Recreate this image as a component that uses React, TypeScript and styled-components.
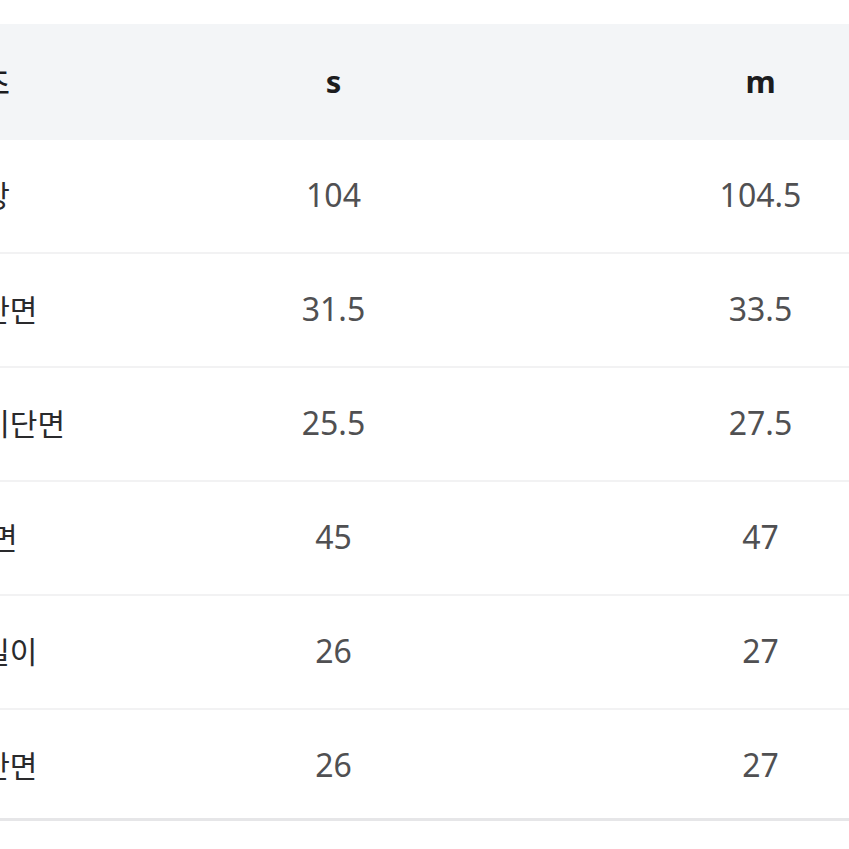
import React from "react";
import styled, { createGlobalStyle } from "styled-components";

const Global = createGlobalStyle`
  html, body { margin: 0; padding: 0; background: #ffffff; overflow: hidden; }
  body { font-family: "Noto Sans", "Noto Sans CJK KR", sans-serif; }
`;

const Page = styled.div`
  width: 849px;
  height: 849px;
  overflow: hidden;
  padding-top: 24px;
  box-sizing: border-box;
  background: #fff;
`;

const Table = styled.div`
  margin-left: -73px;
  width: 1049px;
  display: grid;
  grid-template-columns: 193px 427px 427px;
`;

const HeadCell = styled.div<{ $label?: boolean }>`
  height: 116px;
  background: #f3f5f7;
  display: flex;
  align-items: center;
  justify-content: ${(p) => (p.$label ? "flex-start" : "center")};
  font-family: "Noto Sans", "Noto Sans CJK KR", sans-serif;
  font-size: ${(p) => (p.$label ? "30px" : "31px")};
  font-weight: ${(p) => (p.$label ? 500 : 700)};
  color: #1c1c1e;
  padding-bottom: 2px;
  box-sizing: border-box;
`;

const Cell = styled.div<{ $label?: boolean; $last?: boolean }>`
  height: ${(p) => (p.$last ? "111px" : "114px")};
  border-bottom: ${(p) => (p.$last ? "3px solid #e6e6e8" : "2px solid #f2f2f3")};
  box-sizing: border-box;
  display: flex;
  align-items: center;
  justify-content: ${(p) => (p.$label ? "flex-start" : "center")};
  font-family: "Noto Sans", "Noto Sans CJK KR", sans-serif;
  font-size: ${(p) => (p.$label ? "30px" : "32px")};
  color: ${(p) => (p.$label ? "#2a2a2c" : "#505052")};
  padding-bottom: ${(p) => (p.$last ? "0px" : "4px")};
`;

const rows: [string, string, string][] = [
  ["총기장", "104", "104.5"],
  ["허리단면", "31.5", "33.5"],
  ["엉덩이단면", "25.5", "27.5"],
  ["힙 단면", "45", "47"],
  ["밑위길이", "26", "27"],
  ["밑단단면", "26", "27"],
];

export default function App() {
  return (
    <Page>
      <Global />
      <Table>
        <HeadCell $label>사이즈</HeadCell>
        <HeadCell>s</HeadCell>
        <HeadCell>m</HeadCell>
        {rows.map(([label, s, m], i) => {
          const last = i === rows.length - 1;
          return (
            <React.Fragment key={label}>
              <Cell $label $last={last}>{label}</Cell>
              <Cell $last={last}>{s}</Cell>
              <Cell $last={last}>{m}</Cell>
            </React.Fragment>
          );
        })}
      </Table>
    </Page>
  );
}
